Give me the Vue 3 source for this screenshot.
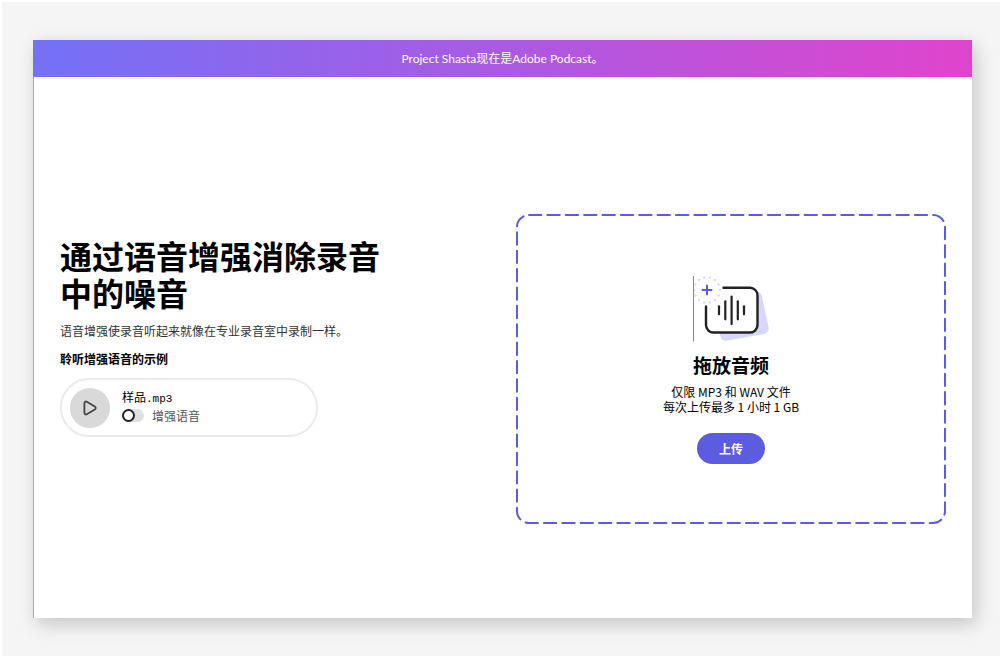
<script setup>
import { ref } from 'vue'

const enhanced = ref(false)
const bars = [
  { x: 26, half: 4 },
  { x: 32.3, half: 9 },
  { x: 38.6, half: 13.8 },
  { x: 44.8, half: 9 },
  { x: 51, half: 4 },
]
</script>

<template>
  <div class="page">
    <div class="card">
      <header class="banner">Project Shasta现在是Adobe Podcast。</header>
      <main class="content">
        <section class="intro">
          <h1>通过语音增强消除录音中的噪音</h1>
          <p class="lead">语音增强使录音听起来就像在专业录音室中录制一样。</p>
          <h2>聆听增强语音的示例</h2>
          <div class="player">
            <button class="play" type="button" aria-label="播放">
              <svg width="16" height="16" viewBox="0 0 16 16" aria-hidden="true">
                <path d="M2.4 3.2v9.6c0 1.4 1.2 2.1 2.4 1.5l8-4.7c1.2-.8 1.2-2.3 0-3.1l-8-4.8C3.6 1.1 2.4 1.8 2.4 3.2z" />
              </svg>
            </button>
            <div class="track">
              <div class="name">样品<span class="ext">.mp3</span></div>
              <label class="switch">
                <input v-model="enhanced" type="checkbox" role="switch" />
                <span>增强语音</span>
              </label>
            </div>
          </div>
        </section>

        <section class="dropzone">
          <svg class="outline" aria-hidden="true">
            <rect x="1" y="1" rx="12" />
          </svg>
          <svg class="art" width="77" height="66" viewBox="0 0 77 66" aria-hidden="true">
            <path class="shade" d="M60 15h2q6 0 7 6l6.5 30q1 6-5 7L35 64.6q-6 1-7.5-4L26 54z" />
            <path class="frame" d="M30.5 11.800H57a7.5 7.5 0 0 1 7.5 7.5V49a7.5 7.5 0 0 1-7.5 7.5H20.5A7.5 7.5 0 0 1 13 49V30.5" />
            <path v-for="bar in bars" :key="bar.x" class="bar" :d="`M${bar.x} ${34.3 - bar.half}v${bar.half * 2}`" />
            <circle class="dots" cx="14" cy="14" r="12.8" pathLength="14" />
            <path class="plus" d="M8.7 14h10.6M14 8.7v10.6" />
            <path class="rule" d="M.5 0v65" />
          </svg>
          <h3>拖放音频</h3>
          <p class="limits">仅限 MP3 和 WAV 文件<br />每次上传最多 1 小时 1 GB</p>
          <button class="upload" type="button">上传</button>
        </section>
      </main>
    </div>
  </div>
</template>

<style>
body {
  margin: 0;
  background: #f5f5f5;
}
</style>

<style scoped>
.page {
  box-sizing: border-box;
  min-height: 100vh;
  padding: 38px 28px 38px 31px;
  border-top: 2px solid #fff;
  border-left: 2px solid #fff;
  font-family: "Noto Sans CJK SC", "Noto Sans", sans-serif;
  color: #000;
}

.card {
  background: #fff;
  box-shadow: 4px 6px 18px rgba(0, 0, 0, 0.2);
}

.banner {
  padding: 10px 16px 9px;
  background: linear-gradient(90deg, #7371f7, #e044cc);
  color: #fff;
  font-family: Lato, "Noto Sans CJK SC", sans-serif;
  font-size: 12px;
  line-height: 18px;
  text-align: center;
}

.content {
  display: grid;
  grid-template-columns: 1fr 1fr;
  gap: 26px;
  padding: 137px 26px 94px;
  border-left: 1px solid #aaa;
}

.intro {
  padding-top: 23px;
}

h1,
h2,
h3,
p {
  margin: 0;
}

h1 {
  max-width: 340px;
  font-size: 32px;
  line-height: 37px;
  font-weight: 700;
}

.lead {
  margin-top: 11px;
  color: #333;
  font-size: 12px;
  line-height: 18px;
}

h2 {
  margin-top: 10px;
  font-size: 12px;
  line-height: 18px;
  font-weight: 700;
}

.player {
  display: flex;
  align-items: center;
  gap: 12px;
  box-sizing: border-box;
  max-width: 258px;
  margin-top: 10px;
  padding: 7px 8px;
  border: 2px solid #ebebeb;
  border-radius: 29px;
}

.play {
  display: grid;
  place-items: center;
  width: 40px;
  height: 40px;
  padding: 0;
  border: 0;
  border-radius: 50%;
  background: #d9d9d9;
}

.play path {
  fill: none;
  stroke: #444;
  stroke-width: 1.8;
}

.track {
  padding-bottom: 3px;
  font-size: 12px;
  line-height: 19px;
}

.ext {
  font-family: "Liberation Mono", monospace;
  font-size: 11px;
  line-height: 1;
}

.switch {
  display: flex;
  align-items: center;
  gap: 8px;
  color: #555;
}

.switch input {
  appearance: none;
  display: flex;
  width: 22px;
  height: 13px;
  margin: 0;
  border-radius: 7px;
  background: #e0e0e0;
}

.switch input::before {
  content: "";
  box-sizing: border-box;
  width: 13px;
  height: 13px;
  border: 2px solid #222;
  border-radius: 50%;
  background: #fff;
}

.switch input:checked {
  justify-content: flex-end;
  background: #5c5ce0;
}

.dropzone {
  position: relative;
  display: flex;
  flex-direction: column;
  align-items: center;
  justify-content: center;
  box-sizing: border-box;
  min-height: 310px;
  padding-top: 1px;
  text-align: center;
}

.outline {
  position: absolute;
  inset: 0;
  width: 100%;
  height: 100%;
  pointer-events: none;
}

.outline rect {
  width: calc(100% - 2px);
  height: calc(100% - 2px);
  fill: none;
  stroke: #5c5ce0;
  stroke-width: 2;
  stroke-linecap: round;
  stroke-dasharray: 12.37 6;
}

.art path,
.art circle {
  fill: none;
  stroke-linecap: round;
}

.art .shade {
  fill: #d7d6ff;
}

.art .frame {
  fill: #fff;
  stroke: #222;
  stroke-width: 2.4;
}

.art .bar {
  stroke: #222;
  stroke-width: 2.2;
}

.art .dots {
  fill: #fff;
  stroke: #d7d6ff;
  stroke-width: 2.4;
  stroke-dasharray: 0 1;
}

.art .plus {
  stroke: #5c5ce0;
  stroke-width: 2;
  stroke-linecap: butt;
}

.art .rule {
  stroke: #888;
  stroke-width: 1;
}

h3 {
  margin-top: 9px;
  font-size: 19px;
  line-height: 28px;
  font-weight: 700;
}

.limits {
  margin-top: 5px;
  font-size: 12px;
  line-height: 15px;
}

.upload {
  margin-top: 19px;
  padding: 0 22px;
  border: 0;
  border-radius: 16px;
  background: #5c5ce0;
  color: #fff;
  font-family: inherit;
  font-size: 12px;
  line-height: 31px;
  font-weight: 700;
}
</style>
